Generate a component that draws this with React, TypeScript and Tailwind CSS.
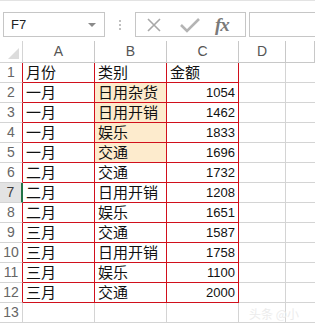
import React from 'react';

type Row = { month: string; cat: string; amount: string; hl?: boolean };

const rows: Row[] = [
  { month: '月份', cat: '类别', amount: '金额' },
  { month: '一月', cat: '日用杂货', amount: '1054', hl: true },
  { month: '一月', cat: '日用开销', amount: '1462', hl: true },
  { month: '一月', cat: '娱乐', amount: '1833', hl: true },
  { month: '一月', cat: '交通', amount: '1696', hl: true },
  { month: '二月', cat: '交通', amount: '1732' },
  { month: '二月', cat: '日用开销', amount: '1208' },
  { month: '二月', cat: '娱乐', amount: '1651' },
  { month: '三月', cat: '交通', amount: '1587' },
  { month: '三月', cat: '日用开销', amount: '1758' },
  { month: '三月', cat: '娱乐', amount: '1100' },
  { month: '三月', cat: '交通', amount: '2000' },
];

const cjk = "font-['Noto_Sans_CJK_SC',sans-serif]";
const num = "font-['Liberation_Sans',Arial,sans-serif]";

const App: React.FC = () => {
  return (
    <div className="w-[315px] h-[327px] overflow-hidden bg-white select-none">
      {/* Formula bar */}
      <div className="h-[41px] border-t border-[#e3e3e3] flex items-start pt-[11px] pl-[3px]">
        <div className="w-[102px] h-[25px] border border-[#c6c6c6] flex items-center justify-between pl-[7px] pr-[8px]">
          <span className={`${num} text-[13px] text-[#222]`}>F7</span>
          <span className="w-0 h-0 border-l-[4px] border-r-[4px] border-t-[4px] border-l-transparent border-r-transparent border-t-[#8a8a8a]" />
        </div>
        <div className="w-[30px] h-[25px] flex flex-col items-center justify-center gap-[2px]">
          <span className="w-[2px] h-[2px] bg-[#c0c0c0]" />
          <span className="w-[2px] h-[2px] bg-[#c0c0c0]" />
          <span className="w-[2px] h-[2px] bg-[#c0c0c0]" />
        </div>
        <div className="w-[111px] h-[25px] border border-[#c6c6c6] flex items-center">
          <svg width="16" height="16" viewBox="0 0 16 16" className="ml-[10px]">
            <path d="M2 2 L14 14 M14 2 L2 14" stroke="#a8a8a8" strokeWidth="1.6" />
          </svg>
          <svg width="20" height="16" viewBox="0 0 20 16" className="ml-[18px]">
            <path d="M1 8 L7 14 L19 2" stroke="#b4b4b4" strokeWidth="2.6" fill="none" />
          </svg>
          <span className="ml-[15px] font-['Liberation_Serif',serif] italic font-bold text-[19px] leading-none text-[#7a7a7a] tracking-[-1px]">fx</span>
        </div>
        <div className="ml-[3px] flex-1 h-[25px] border-y border-l border-[#c6c6c6]" />
      </div>

      {/* Grid */}
      <div className="grid grid-cols-[23px_72px_72px_72px_47px_1fr]">
        {/* header row */}
        <div className="h-[22px] border-r border-b border-[#d4d4d4] flex items-end justify-end pr-[3px] pb-[3px]">
          <svg width="11" height="11" viewBox="0 0 11 11">
            <path d="M11 0 L11 11 L0 11 Z" fill="#dcdcdc" />
          </svg>
        </div>
        {['A', 'B', 'C', 'D', ''].map((c, i) => (
          <div
            key={i}
            className={`h-[22px] border-r border-b border-[#c8c8c8] flex items-center justify-center ${num} text-[14px] text-[#555]`}
          >
            {c}
          </div>
        ))}

        {rows.map((r, i) => {
          const n = i + 1;
          const active = n === 7;
          return (
            <React.Fragment key={n}>
              <div
                className={`h-[20px] border-b border-[#d4d4d4] flex items-center justify-center ${num} text-[14px] ${
                  active
                    ? 'bg-[#e3e3e3] text-[#3c3c3c] border-r-2 border-r-[#217346]'
                    : 'text-[#666] border-r border-r-[#d0101c]'
                }`}
              >
                {n}
              </div>
              <div className={`h-[20px] border-r border-b border-[#d0101c] pl-[3px] flex items-center ${cjk} text-[15px] text-[#111]`}>
                {r.month}
              </div>
              <div
                className={`h-[20px] border-r border-b border-[#d0101c] pl-[3px] flex items-center ${cjk} text-[15px] text-[#111] ${
                  r.hl ? 'bg-[#fdebcd]' : ''
                }`}
              >
                {r.cat}
              </div>
              <div
                className={`h-[20px] border-r border-b border-[#d0101c] pr-[3px] flex items-center ${
                  n === 1 ? `pl-[3px] ${cjk} text-[15px] justify-start` : `${num} text-[13px] justify-end`
                } text-[#111]`}
              >
                {r.amount}
              </div>
              <div className="h-[20px] border-r border-b border-[#d4d4d4]" />
              <div className="h-[20px] border-b border-[#d4d4d4]" />
            </React.Fragment>
          );
        })}

        {/* row 13 */}
        <div className={`h-[20px] border-r border-b border-[#d4d4d4] flex items-center justify-center ${num} text-[14px] text-[#666]`}>13</div>
        <div className="h-[20px] border-r border-b border-[#d4d4d4]" />
        <div className="h-[20px] border-r border-b border-[#d4d4d4]" />
        <div className="h-[20px] border-r border-b border-[#d4d4d4]" />
        <div className="h-[20px] border-r border-b border-[#d4d4d4] relative">
          <span className={`absolute left-[10px] top-[2px] whitespace-nowrap ${cjk} text-[12px] text-[#ececec]`}>头条 @小</span>
        </div>
        <div className="h-[20px] border-b border-[#d4d4d4]" />
      </div>
    </div>
  );
};

export default App;
